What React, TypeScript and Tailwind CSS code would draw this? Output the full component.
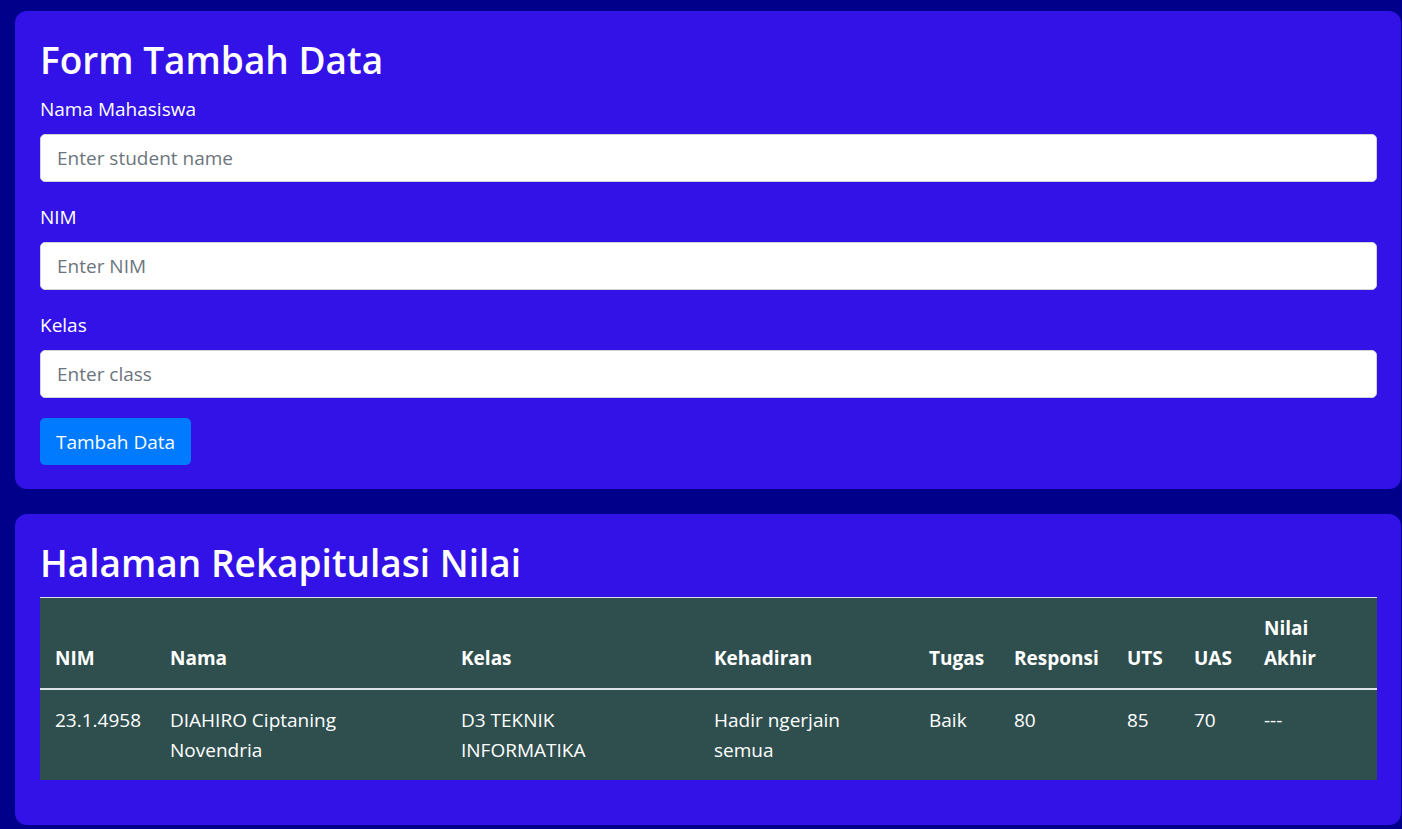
import React from 'react'

const font = { fontFamily: '"Open Sans", "Noto Sans", Arial, sans-serif' }

const columns = [
  { label: 'NIM', width: 'w-[115px]' },
  { label: 'Nama', width: 'w-[291px]' },
  { label: 'Kelas', width: 'w-[253px]' },
  { label: 'Kehadiran', width: 'w-[215px]' },
  { label: 'Tugas', width: 'w-[85px]' },
  { label: 'Responsi', width: 'w-[113px]' },
  { label: 'UTS', width: 'w-[67px]' },
  { label: 'UAS', width: 'w-[70px]' },
  { label: 'Nilai Akhir', width: 'w-[128px]' },
]

const rows = [
  ['23.1.4958', 'DIAHIRO Ciptaning Novendria', 'D3 TEKNIK INFORMATIKA', 'Hadir ngerjain semua', 'Baik', '80', '85', '70', '---'],
]

const fields = [
  { label: 'Nama Mahasiswa', placeholder: 'Enter student name' },
  { label: 'NIM', placeholder: 'Enter NIM' },
  { label: 'Kelas', placeholder: 'Enter class' },
]

export default function App() {
  return (
    <div className="min-h-screen bg-[#00008b] pt-[11px] pb-[10px] text-white" style={font}>
      {/* Form card */}
      <div className="ml-[15px] w-[1386px] rounded-[12px] bg-[#3212e6] pt-[25px] pb-[24px] pl-[25px] pr-[24px]">
        <h2 className="mb-[10px] text-[37px] font-semibold leading-[48px]">Form Tambah Data</h2>
        {fields.map((f) => (
          <div key={f.label} className="mb-[20px] last:mb-[19px]">
            <label className="mb-[10px] block text-[19px] leading-[30px]">{f.label}</label>
            <input
              type="text"
              placeholder={f.placeholder}
              className="block h-[48px] w-full rounded-[5px] border border-[#ced4da] bg-white px-[16px] text-[19px] text-[#495057] placeholder:text-[#6c757d] outline-none"
            />
          </div>
        ))}
        <button className="h-[47px] rounded-[5px] bg-[#007bff] px-[16px] text-[19px] leading-[30px] text-white">
          Tambah Data
        </button>
      </div>

      {/* Recap card */}
      <div className="mt-[25px] ml-[15px] w-[1386px] rounded-[12px] bg-[#3212e6] pt-[25px] pb-[25px] pl-[25px] pr-[24px]">
        <h2 className="mb-[10px] text-[37px] font-semibold leading-[48px]">Halaman Rekapitulasi Nilai</h2>
        <table className="mb-[20px] w-full table-fixed border-collapse border-t border-[#dee2e6] bg-[#2f4f4f] text-[19px] leading-[30px]">
          <colgroup>
            {columns.map((c) => (
              <col key={c.label} className={c.width} />
            ))}
          </colgroup>
          <thead>
            <tr>
              {columns.map((c) => (
                <th
                  key={c.label}
                  className="border-b-2 border-[#dee2e6] p-[15px] text-left align-bottom font-bold"
                >
                  {c.label}
                </th>
              ))}
            </tr>
          </thead>
          <tbody>
            {rows.map((r, i) => (
              <tr key={i}>
                {r.map((cell, j) => (
                  <td key={j} className="p-[15px] text-left align-top">
                    <div className="max-w-[200px]">{cell}</div>
                  </td>
                ))}
              </tr>
            ))}
          </tbody>
        </table>
      </div>
    </div>
  )
}
